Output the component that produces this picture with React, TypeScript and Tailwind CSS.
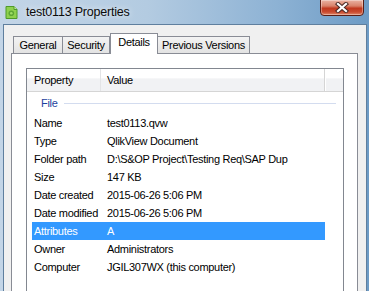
import React from "react";

const rows: [string, string][] = [
  ["Name", "test0113.qvw"],
  ["Type", "QlikView Document"],
  ["Folder path", "D:\\S&OP Project\\Testing Req\\SAP Dup"],
  ["Size", "147 KB"],
  ["Date created", "2015-06-26 5:06 PM"],
  ["Date modified", "2015-06-26 5:06 PM"],
  ["Attributes", "A"],
  ["Owner", "Administrators"],
  ["Computer", "JGIL307WX (this computer)"],
];

function DocIcon() {
  return (
    <svg width="13" height="13" viewBox="0 0 13 13">
      <path d="M1 0.5 H9 L12 3.5 V12.5 H1 Z" fill="#8fd14f" stroke="#4f9a2a" strokeWidth="1" />
      <path d="M9 0.5 V3.5 H12" fill="#c9ef9e" stroke="#4f9a2a" strokeWidth="1" />
      <circle cx="6.3" cy="7.3" r="2.8" fill="#5ea635" />
      <circle cx="6.3" cy="7.3" r="1.3" fill="#9fdc66" />
    </svg>
  );
}

function CloseButton() {
  return (
    <div className="ml-auto mr-[5px] self-start w-[44px] h-[17px] -mt-px rounded-b-[4px] border border-[#5a1d14] bg-[linear-gradient(to_bottom,#eab3a3_0%,#d9826a_40%,#c1391f_55%,#c94a2f_80%,#e08a6c_100%)] flex items-center justify-center shadow-[inset_0_0_0_1px_rgba(255,255,255,0.35)]">
      <svg width="14" height="11" viewBox="0 0 14 11">
        <path d="M3 2 L11 9 M11 2 L3 9" stroke="#4a2a26" strokeWidth="4.2" strokeLinecap="square" />
        <path d="M3 2 L11 9 M11 2 L3 9" stroke="#ffffff" strokeWidth="2.2" strokeLinecap="square" />
      </svg>
    </div>
  );
}

export default function App() {
  const font = { fontFamily: '"Liberation Sans", Arial, sans-serif' };
  return (
    <div
      className="w-[369px] h-[291px] overflow-hidden flex flex-col bg-[linear-gradient(to_right,#c3d5e7_0%,#b3cbe1_40%,#8db2d4_75%,#6d9bc5_100%)] text-[11px] tracking-[-0.3px] text-black"
      style={font}
    >
      {/* Title bar */}
      <div className="h-[24px] flex items-center shrink-0">
        <div className="ml-[5px] mt-[1px]">
          <DocIcon />
        </div>
        <div className="ml-[8px] text-[12.5px] tracking-[-0.2px] text-[#0b0b0b] [text-shadow:0_0_6px_rgba(255,255,255,0.9)]">
          test0113 Properties
        </div>
        <CloseButton />
      </div>

      {/* Client area */}
      <div className="flex-1 ml-[3px] w-[364px] border-l border-t border-r border-[#5f7f9e] bg-[#f0f0f0] pl-[7px] pt-[7px]">
        {/* Tabs */}
        <div className="flex items-end h-[21px] relative z-10 pl-[2px]">
          <div className="w-[49px] h-[17px] border-l border-t border-[#898c95] bg-[linear-gradient(to_bottom,#f3f3f3,#e3e3e3)] flex items-center justify-center">
            General
          </div>
          <div className="w-[48px] h-[17px] border-l border-t border-r border-[#898c95] bg-[linear-gradient(to_bottom,#f3f3f3,#e3e3e3)] flex items-center justify-center">
            Security
          </div>
          <div className="w-[48px] h-[21px] -mb-px border-l border-t border-r border-[#898c95] bg-white flex items-center justify-center pb-[3px]">
            Details
          </div>
          <div className="w-[92px] h-[17px] border-t border-r border-[#898c95] bg-[linear-gradient(to_bottom,#f3f3f3,#e3e3e3)] flex items-center justify-center">
            Previous Versions
          </div>
        </div>

        {/* Panel */}
        <div className="w-[347px] h-[260px] border border-[#898c95] bg-white pl-[14px] pt-[14px]">
          <div className="w-[318px] h-[240px] border border-[#828790] bg-white">
            {/* Header */}
            <div className="h-[23px] flex border-b border-[#d5d5d5] bg-[linear-gradient(to_bottom,#ffffff_0%,#ffffff_40%,#f1f2f4_45%,#f1f2f4_100%)]">
              <div className="w-[73px] pl-[7px] flex items-center">Property</div>
              <div className="w-px bg-[#e3e4e6]" />
              <div className="w-[223px] pl-[6px] flex items-center">Value</div>
              <div className="w-px bg-[#d5d5d5]" />
              <div className="w-px bg-white" />
            </div>
            {/* Group */}
            <div className="h-[22px] flex items-center pl-[14px]">
              <span className="text-[#1d3f9e]">File</span>
              <div className="ml-[6px] w-[272px] h-px bg-[#d3dcef]" />
            </div>
            {/* Rows */}
            {rows.map(([k, v]) => {
              const sel = k === "Attributes";
              return (
                <div
                  key={k}
                  className={
                    "ml-[5px] w-[293px] h-[18px] flex items-center " +
                    (sel ? "bg-[#3399ff] text-white" : "")
                  }
                >
                  <div className="w-[75px] pl-[2px] whitespace-nowrap">{k}</div>
                  <div className="whitespace-nowrap">{v}</div>
                </div>
              );
            })}
          </div>
        </div>
      </div>
    </div>
  );
}
